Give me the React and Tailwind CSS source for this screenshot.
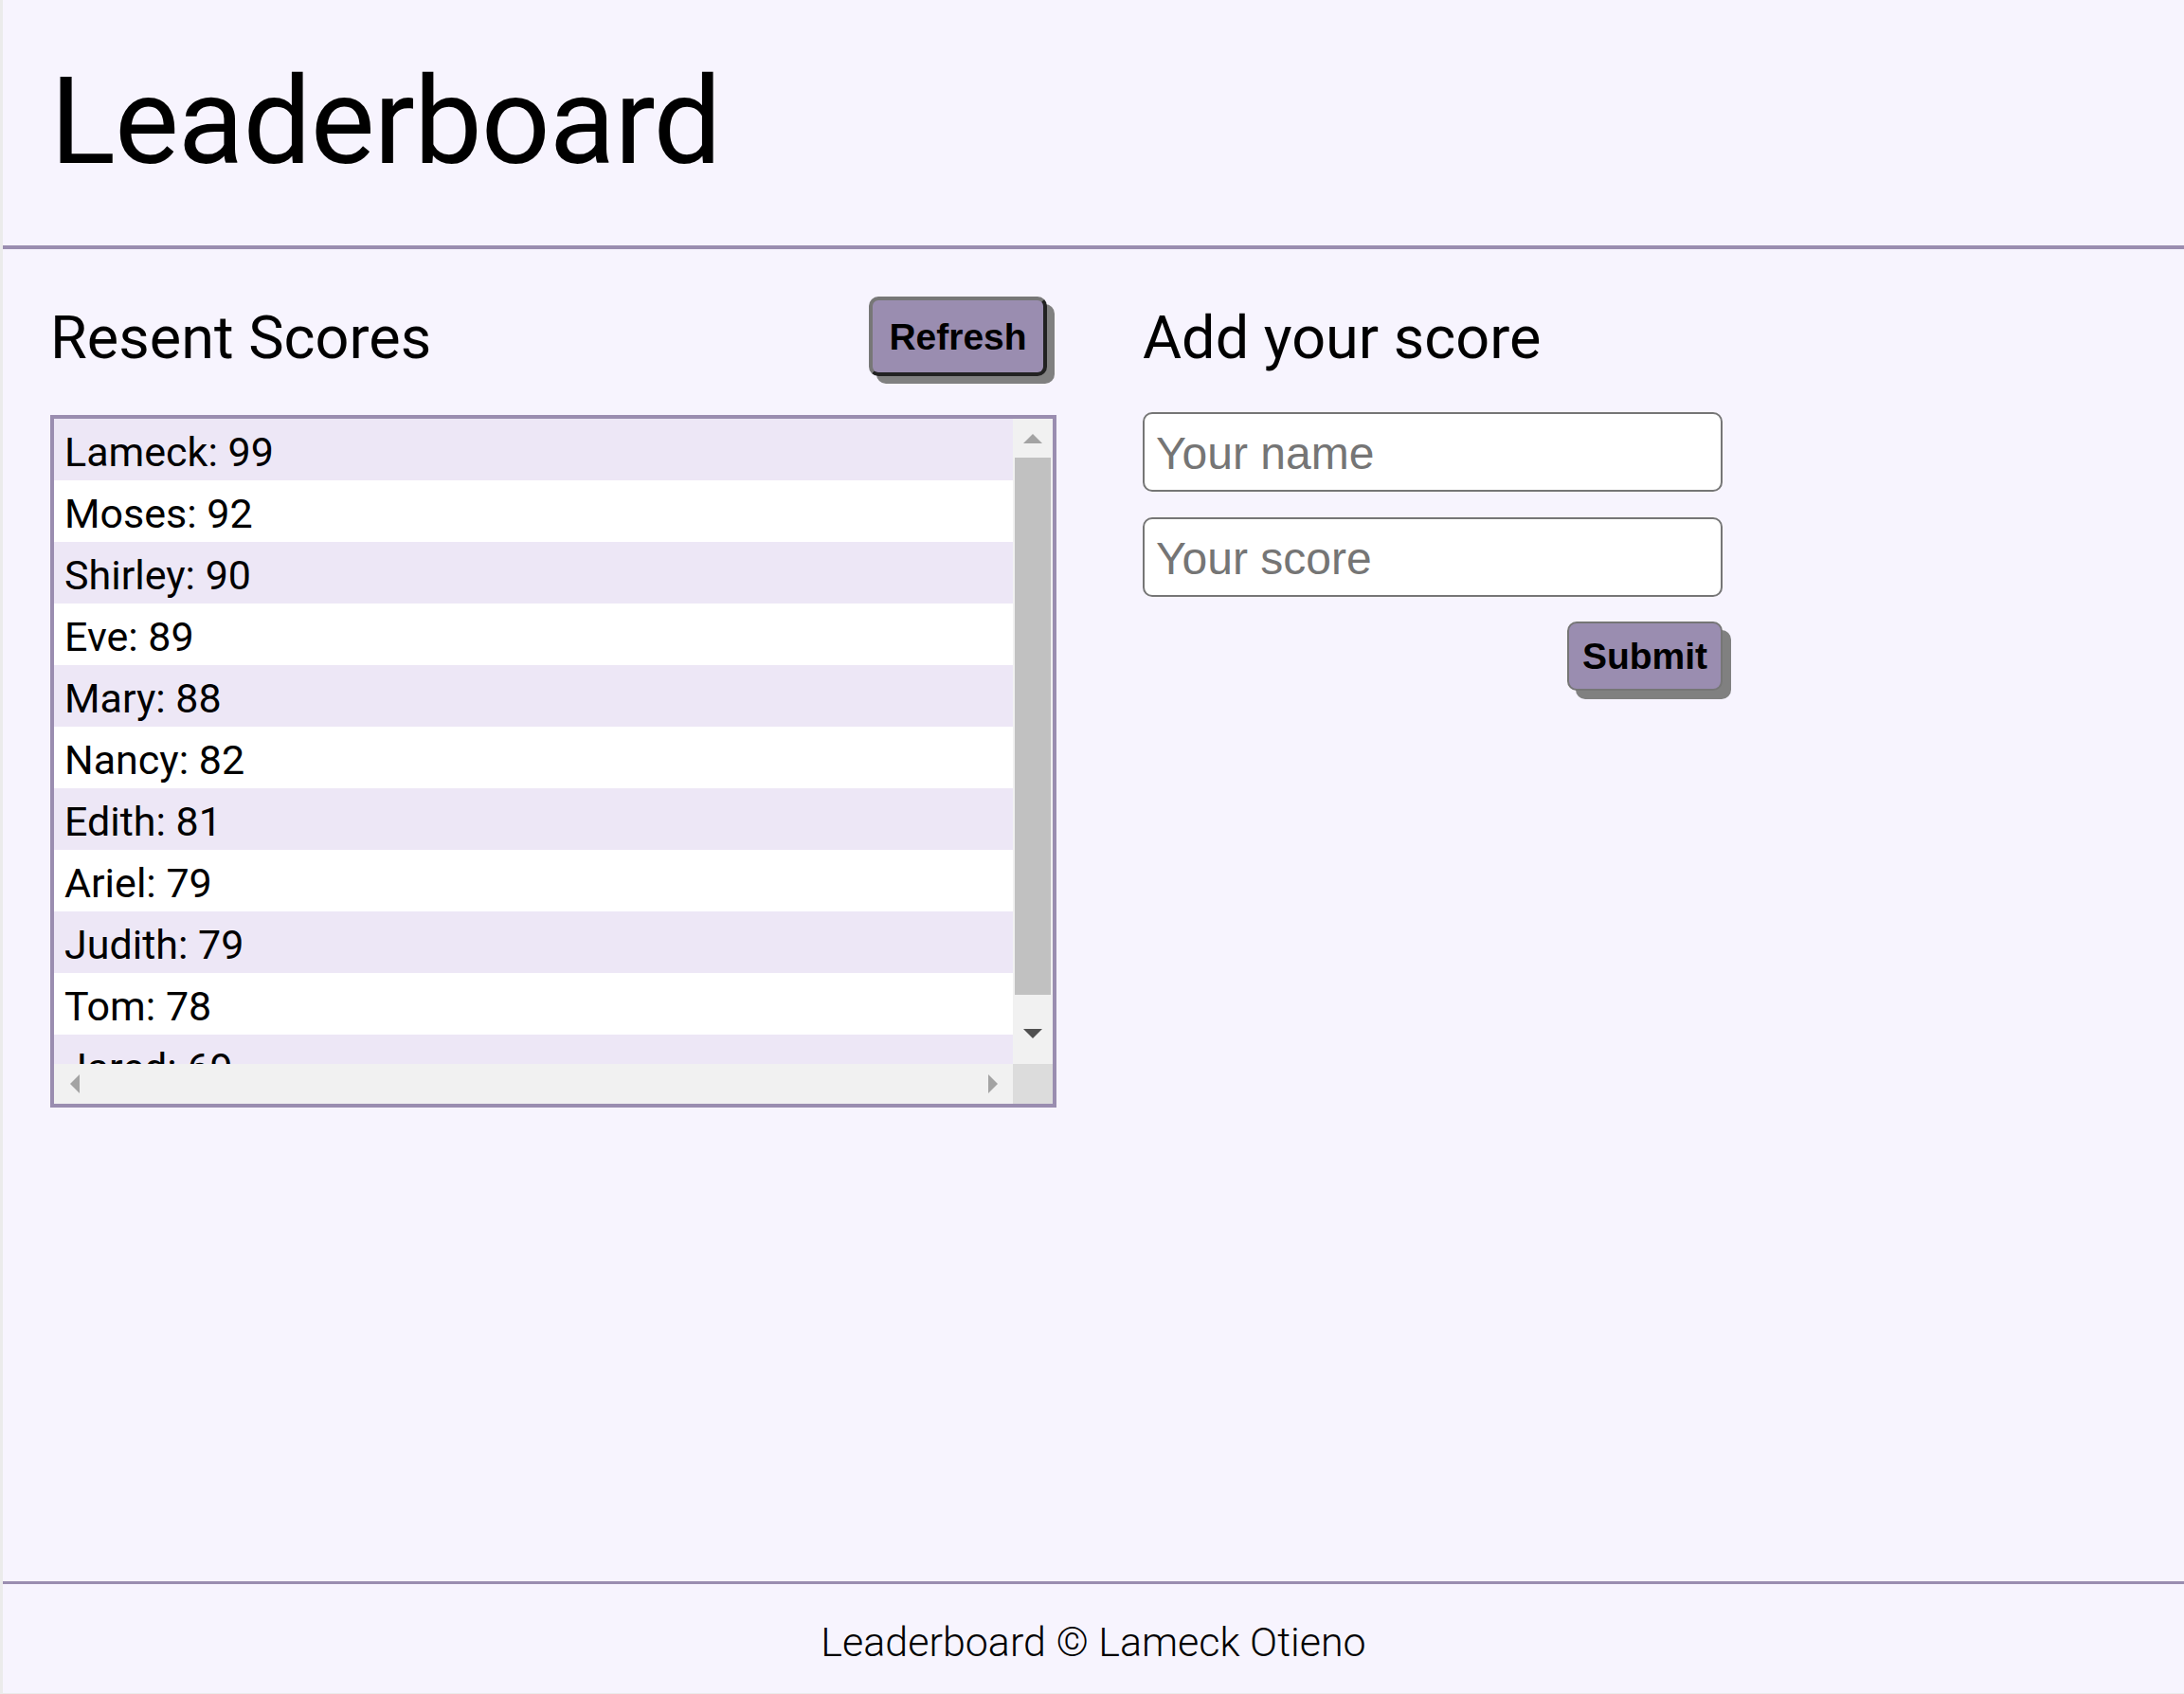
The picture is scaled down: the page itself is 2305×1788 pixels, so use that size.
import React from 'react';

const scores = [
    { name: 'Lameck', score: 99 },
    { name: 'Moses', score: 92 },
    { name: 'Shirley', score: 90 },
    { name: 'Eve', score: 89 },
    { name: 'Mary', score: 88 },
    { name: 'Nancy', score: 82 },
    { name: 'Edith', score: 81 },
    { name: 'Ariel', score: 79 },
    { name: 'Judith', score: 79 },
    { name: 'Tom', score: 78 },
    { name: 'Jared', score: 69 },
    { name: 'Brian', score: 65 },
];

const Arrow = ({ dir, color }) => {
    const points = {
        up: '0,10 10,0 20,10',
        down: '0,0 20,0 10,10',
        left: '10,0 10,20 0,10',
        right: '0,0 10,10 0,20',
    }[dir];
    const horizontal = dir === 'up' || dir === 'down';
    return (
        <svg width={horizontal ? 20 : 10} height={horizontal ? 10 : 20} viewBox={horizontal ? '0 0 20 10' : '0 0 10 20'}>
            <polygon points={points} fill={color} />
        </svg>
    );
};

const ScoreList = () => (
    <div className="mt-[41px] w-[1062px] h-[731px] border-[4px] border-[#9a8db0] grid grid-cols-[1fr_42px] grid-rows-[1fr_42px] bg-white">
        <ul className="overflow-hidden">
            {scores.map((s, i) => (
                <li
                    key={s.name}
                    className={`h-[65px] pl-[11px] pt-[6px] leading-[59px] text-[43px] text-black ${i % 2 === 0 ? 'bg-[#ede7f6]' : 'bg-white'}`}
                >
                    {s.name}: {s.score}
                </li>
            ))}
        </ul>

        {/* vertical scrollbar */}
        <div className="bg-[#f1f1f1] flex flex-col items-center">
            <div className="h-[41px] w-full flex items-center justify-center">
                <Arrow dir="up" color="#a3a3a3" />
            </div>
            <div className="w-[38px] h-[567px] bg-[#c1c1c1]" />
            <div className="flex-1 w-full flex items-center justify-center pt-[8px]">
                <Arrow dir="down" color="#505050" />
            </div>
        </div>

        {/* horizontal scrollbar */}
        <div className="bg-[#f1f1f1] flex items-center justify-between pl-[17px] pr-[16px]">
            <Arrow dir="left" color="#a3a3a3" />
            <Arrow dir="right" color="#a3a3a3" />
        </div>
        <div className="bg-[#dcdcdc]" />
    </div>
);

export default function App() {
    return (
        <div className="min-h-screen flex flex-col bg-[#f7f4fe] border-l-[3px] border-b border-[#ebebeb] text-black font-['Roboto',sans-serif]">
            <header className="h-[263px] shrink-0 border-b-4 border-[#9a8db0] pl-[50px] pt-[64px]">
                <h1 className="text-[128px] leading-none tracking-[-1px]">Leaderboard</h1>
            </header>

            <main className="flex-1 flex gap-[91px] pl-[50px] pt-[50px]">
                <section className="w-[1062px] flex flex-col">
                    <div className="flex items-start justify-between pr-[10px]">
                        <h2 className="text-[63px] leading-none mt-[12px]">Resent Scores</h2>
                        <button className="w-[188px] h-[84px] rounded-[10px] border-4 border-t-[#777777] border-l-[#777777] border-r-[#222222] border-b-[#222222] bg-[#9a8db0] shadow-[8px_8px_0_0_#808080] font-['Liberation_Sans',Arial,sans-serif] font-bold text-[39px] leading-none">
                            Refresh
                        </button>
                    </div>
                    <ScoreList />
                </section>

                <section className="w-[612px] flex flex-col">
                    <h2 className="text-[63px] leading-none mt-[12px]">Add your score</h2>
                    <form className="mt-[47px] flex flex-col">
                        <input
                            type="text"
                            placeholder="Your name"
                            className="w-[612px] h-[84px] bg-white border-2 border-[#767676] rounded-[10px] pl-[12px] pt-[2px] font-['Liberation_Sans',Arial,sans-serif] text-[48px] placeholder:text-[#757575] outline-none"
                        />
                        <input
                            type="text"
                            placeholder="Your score"
                            className="mt-[27px] w-[612px] h-[84px] bg-white border-2 border-[#767676] rounded-[10px] pl-[12px] pt-[2px] font-['Liberation_Sans',Arial,sans-serif] text-[48px] placeholder:text-[#757575] outline-none"
                        />
                        <button
                            type="submit"
                            className="self-end mt-[26px] w-[164px] h-[73px] rounded-[10px] border-2 border-[#767676] bg-[#9a8db0] shadow-[9px_9px_0_0_#808080] font-['Liberation_Sans',Arial,sans-serif] font-bold text-[39px] leading-none"
                        >
                            Submit
                        </button>
                    </form>
                </section>
            </main>

            <footer className="h-[118px] shrink-0 border-t-[3px] border-[#9a8db0] pt-[40px] text-center">
                <p className="text-[43px] leading-none font-light">Leaderboard © Lameck Otieno</p>
            </footer>
        </div>
    );
}
